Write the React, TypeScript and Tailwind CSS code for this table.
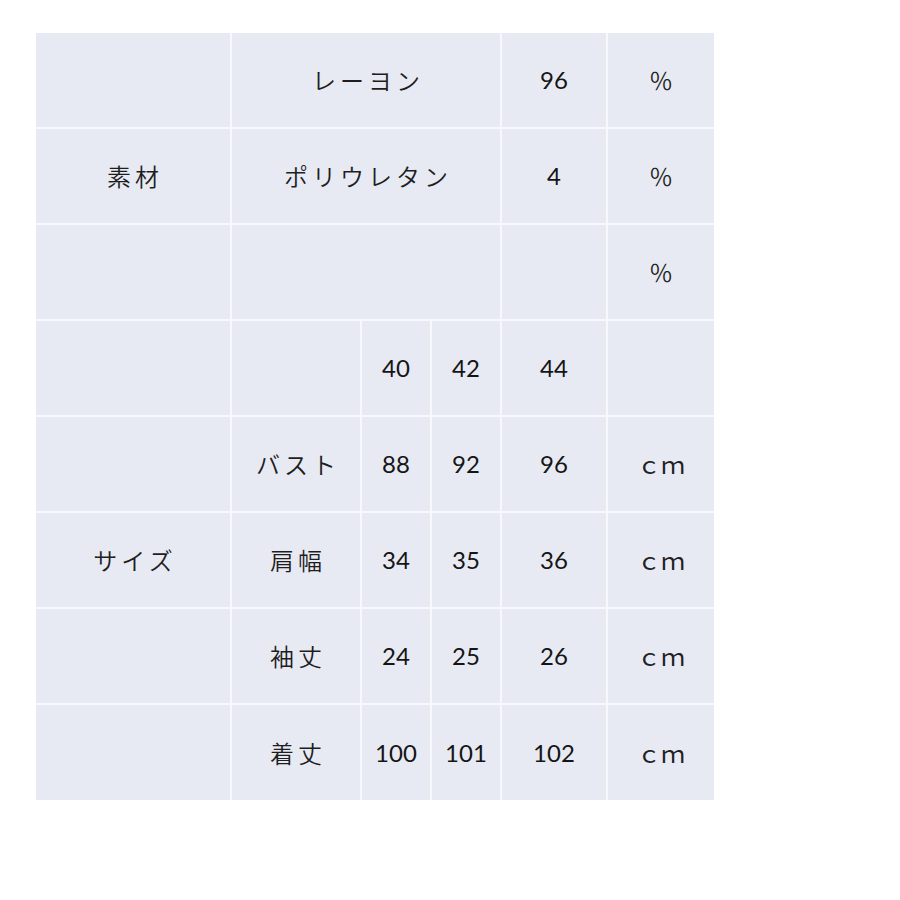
import React from "react";

// 素材・サイズ表
type Cell = { text?: string; span?: number; kind?: "ja" | "num" | "unit" | "pct" };

const rows: Cell[][] = [
  [{}, { text: "レーヨン", span: 3, kind: "ja" }, { text: "96", kind: "num" }, { text: "％", kind: "pct" }],
  [{ text: "素材", kind: "ja" }, { text: "ポリウレタン", span: 3, kind: "ja" }, { text: "4", kind: "num" }, { text: "％", kind: "pct" }],
  [{}, { span: 3 }, {}, { text: "％", kind: "pct" }],
  [{}, {}, { text: "40", kind: "num" }, { text: "42", kind: "num" }, { text: "44", kind: "num" }, {}],
  [{}, { text: "バスト", kind: "ja" }, { text: "88", kind: "num" }, { text: "92", kind: "num" }, { text: "96", kind: "num" }, { text: "ｃｍ", kind: "unit" }],
  [{ text: "サイズ", kind: "ja" }, { text: "肩幅", kind: "ja" }, { text: "34", kind: "num" }, { text: "35", kind: "num" }, { text: "36", kind: "num" }, { text: "ｃｍ", kind: "unit" }],
  [{}, { text: "袖丈", kind: "ja" }, { text: "24", kind: "num" }, { text: "25", kind: "num" }, { text: "26", kind: "num" }, { text: "ｃｍ", kind: "unit" }],
  [{}, { text: "着丈", kind: "ja" }, { text: "100", kind: "num" }, { text: "101", kind: "num" }, { text: "102", kind: "num" }, { text: "ｃｍ", kind: "unit" }],
];

const kindClass = {
  ja: "text-[24px] font-[350] tracking-[4px] pl-[4px] text-[#1e1e1e] [font-family:'Noto_Sans_CJK_JP',sans-serif]",
  num: "text-[24px] text-[#151515] [font-family:Lato,'Noto_Sans_CJK_JP',sans-serif]",
  unit: "text-[24px] text-[#222] [font-family:'Noto_Sans_CJK_JP',sans-serif]",
  pct: "text-[24px] font-[350] text-[#222] [font-family:'Noto_Sans_CJK_JP',sans-serif]",
};

const App: React.FC = () => {
  return (
    <div className="min-h-[900px] w-[900px] bg-white pl-[36px] pt-[33px]">
      <div className="grid w-[678px] grid-cols-[194px_128px_68px_68px_104px_106px] grid-rows-[94px_94px_94px_94px_94px_94px_94px_95px] gap-[2px] bg-[#f7f8fb]">
        {rows.map((row, r) =>
          row.map((cell, c) => (
            <div
              key={`${r}-${c}`}
              className={`flex items-center justify-center bg-[#e8eaf3] ${
                cell.span === 3 ? "col-span-3" : ""
              }`}
            >
              {cell.text && <span className={kindClass[cell.kind ?? "ja"]}>{cell.text}</span>}
            </div>
          ))
        )}
      </div>
    </div>
  );
};

export default App;
